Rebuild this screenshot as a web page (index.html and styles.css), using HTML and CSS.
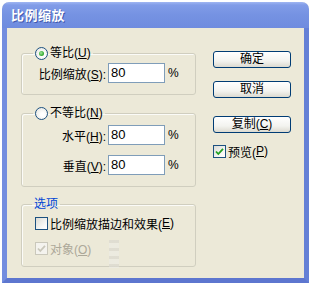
FILE: index.html
```html
<!DOCTYPE html>
<html lang="zh-CN">
<head>
<meta charset="utf-8">
<title>比例缩放</title>
<link rel="stylesheet" href="styles.css">
</head>
<body>
<div class="window">
  <div class="titlebar">比例缩放</div>
  <div class="frame">
    <div class="main">
      <fieldset class="group g1">
        <legend class="opt"><span class="radio checked"></span>等比(<u>U</u>)</legend>
        <div class="row"><label class="lbl">比例缩放(<u>S</u>):</label><span class="input">80</span><span class="pct">%</span></div>
      </fieldset>
      <fieldset class="group g2">
        <legend class="opt"><span class="radio"></span>不等比(<u>N</u>)</legend>
        <div class="row"><label class="lbl">水平(<u>H</u>):</label><span class="input">80</span><span class="pct">%</span></div>
        <div class="row r2"><label class="lbl">垂直(<u>V</u>):</label><span class="input">80</span><span class="pct">%</span></div>
      </fieldset>
      <fieldset class="group g3">
        <legend class="title">选项</legend>
        <div class="crow"><span class="check"></span>比例缩放描边和效果(<u>E</u>)</div>
        <div class="crow c2 disabled"><span class="check on dim"><svg viewBox="0 0 11 11" width="11" height="11"><path d="M2 5.5 L4.3 8 L9 2.8" fill="none" stroke="#c9c7ba" stroke-width="1.8"/></svg></span><span class="dtext">对象(<u>O</u>)</span><span class="ghost"></span></div>
      </fieldset>
    </div>
    <div class="side">
      <button class="btn b1">确定</button>
      <button class="btn b2">取消</button>
      <button class="btn b3">复制(<u>C</u>)</button>
      <div class="crow preview"><span class="check on"><svg viewBox="0 0 11 11" width="11" height="11"><path d="M2 5.5 L4.3 8 L9 2.8" fill="none" stroke="#21a121" stroke-width="1.8"/></svg></span>预览(<u>P</u>)</div>
    </div>
  </div>
</div>
</body>
</html>
```
FILE: styles.css
```css
* { box-sizing: border-box; }
html, body { margin: 0; padding: 0; background: #ffffff; }
body {
  font-family: "Liberation Sans", "Noto Sans CJK SC", sans-serif;
  font-size: 12px;
  color: #000;
}
.window {
  margin: 2px 0 0 2px;
  width: 307px;
  height: 281px;
  display: flex;
  flex-direction: column;
  border-radius: 7px 7px 0 0;
  overflow: hidden;
  background: #ece9d8;
}
.titlebar {
  height: 26px;
  flex: none;
  padding: 5px 0 0 9px;
  background: linear-gradient(#a0b6f2 0, #819ce8 3px, #7592e2 50%, #6f8cdf 100%);
  color: #fff;
  font-family: "Noto Sans CJK SC", sans-serif;
  font-weight: bold;
  font-size: 13px;
  line-height: 16px;
  letter-spacing: 0.5px;
  text-shadow: 1px 1px 0 #4259ad;
}
.frame {
  flex: 1;
  display: flex;
  border: 5px solid #738ddf;
  border-top: 0;
  border-right-color: #6480d6;
  border-bottom-color: #5d76cf;
  padding: 17px 0 0 14px;
  gap: 17px;
}
.main { width: 175px; display: flex; flex-direction: column; }
.group {
  margin: 0;
  padding: 0;
  border: 1px solid #d0cebf;
  border-radius: 3px;
  box-shadow: inset 1px 1px 0 #fbfbf7;
}
.group legend {
  margin-left: 11px;
  padding: 0 2px;
  height: 16px;
  line-height: 16px;
  display: flex;
  align-items: center;
}
.group legend.title { color: #0046d5; margin-left: 10px; }
.g1 { padding: 2px 0 11px; }
.g2 { margin-top: 10px; padding: 4px 0 11px; }
.g3 { margin-top: 9px; padding: 3px 0 10px; }
.radio {
  width: 13px; height: 13px;
  border-radius: 50%;
  border: 1px solid #1c5180;
  background: radial-gradient(circle at 60% 60%, #ffffff 20%, #e2e2dc 100%);
  margin-right: 2px;
  display: inline-flex;
  align-items: center;
  justify-content: center;
}
.radio.checked::after {
  content: "";
  width: 5px; height: 5px;
  border-radius: 50%;
  background: radial-gradient(circle at 40% 40%, #a6e6a0 0, #3fb23c 55%, #1f8a1c 100%);
}
.row {
  display: flex;
  align-items: center;
  height: 20px;
  padding-left: 15px;
}
.r2 { margin-top: 10px; }
.lbl { width: 69px; text-align: right; margin-right: 2px; white-space: nowrap; }
.input {
  width: 57px; height: 20px;
  border: 1px solid #7f9db9;
  background: #fff;
  font-size: 13px;
  line-height: 18px;
  padding-left: 2px;
}
.pct { margin-left: 3px; }
.crow {
  display: flex;
  align-items: center;
  height: 16px;
  padding-left: 13px;
  white-space: nowrap;
}
.c2 { margin-top: 9px; }
.check {
  width: 13px; height: 13px;
  border: 1px solid #1c5180;
  background: linear-gradient(135deg, #dcdcd5 0, #f8f8f6 70%, #fff 100%);
  margin-right: 2px;
  display: inline-flex;
  align-items: center;
  justify-content: center;
  flex: none;
}
.check.dim { border-color: #cac8bb; background: #f4f3ee; }
.disabled { color: #aca899; }
.dtext { flex: none; }
.ghost {
  flex: none;
  width: 10px;
  height: 28px;
  margin-left: 18px;
  margin-top: 12px;
  background: repeating-linear-gradient(#dcdad0 0, #dcdad0 3px, #ecebe2 3px, #ecebe2 8px);
  opacity: 0.8;
}
.side { display: flex; flex-direction: column; padding-top: 6px; width: 78px; }
.btn {
  width: 78px; height: 17px;
  padding: 0;
  border: 1px solid #003c74;
  border-radius: 3px;
  background: linear-gradient(#ffffff 0, #f3f3ef 60%, #dcdad0 100%);
  font-family: "Liberation Sans", "Noto Sans CJK SC", sans-serif;
  font-size: 12px;
  line-height: 15px;
  color: #000;
}
.b2 { margin-top: 13px; }
.b3 { margin-top: 18px; }
.preview { padding-left: 0; margin-top: 10px; }
```
